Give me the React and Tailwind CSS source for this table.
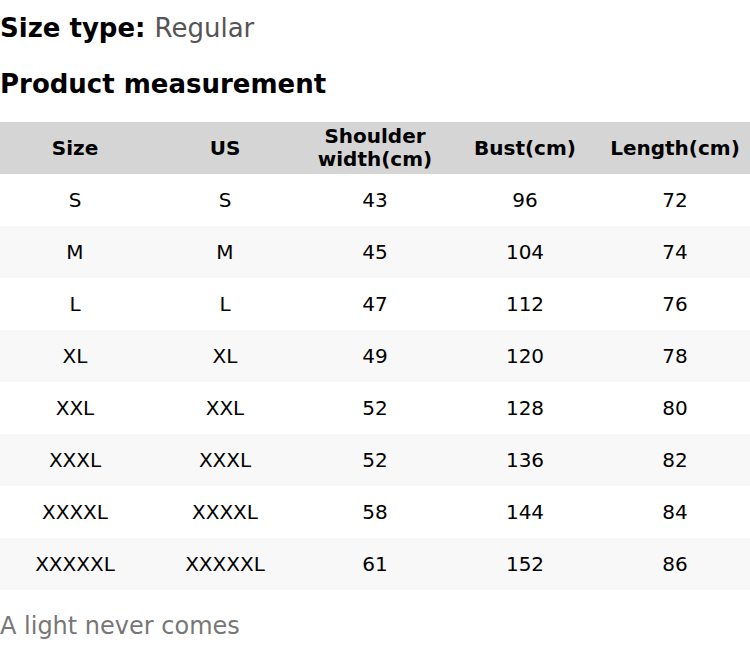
import React from 'react';

const rows = [
  ['S', 'S', '43', '96', '72'],
  ['M', 'M', '45', '104', '74'],
  ['L', 'L', '47', '112', '76'],
  ['XL', 'XL', '49', '120', '78'],
  ['XXL', 'XXL', '52', '128', '80'],
  ['XXXL', 'XXXL', '52', '136', '82'],
  ['XXXXL', 'XXXXL', '58', '144', '84'],
  ['XXXXXL', 'XXXXXL', '61', '152', '86'],
];

const headers = ['Size', 'US', 'Shoulder width(cm)', 'Bust(cm)', 'Length(cm)'];

export default function App() {
  return (
    <div className="w-[750px] h-[662px] bg-white text-black font-['DejaVu_Sans',sans-serif]">
      <div className="pt-[11px] text-[26px] leading-[34px]">
        <span className="font-bold">Size type: </span>
        <span className="text-[#555]">Regular</span>
      </div>

      <h2 className="mt-[22px] text-[26px] leading-[34px] font-bold">Product measurement</h2>

      {/* Measurement table */}
      <div className="mt-[21px]">
        <div className="grid grid-cols-5 h-[52px] bg-[#d5d5d5]">
          {headers.map((h) => (
            <div key={h} className="flex items-center justify-center text-center text-[20px] leading-[23px] font-bold px-1">
              {h}
            </div>
          ))}
        </div>
        {rows.map((row, i) => (
          <div key={i} className={`grid grid-cols-5 h-[52px] ${i % 2 === 1 ? 'bg-[#f8f8f8]' : 'bg-white'}`}>
            {row.map((cell, j) => (
              <div key={j} className="flex items-center justify-center text-[20px]">
                {cell}
              </div>
            ))}
          </div>
        ))}
      </div>

      <p className="mt-[19px] text-[24px] leading-[34px] text-[#777]">A light never comes</p>
    </div>
  );
}
